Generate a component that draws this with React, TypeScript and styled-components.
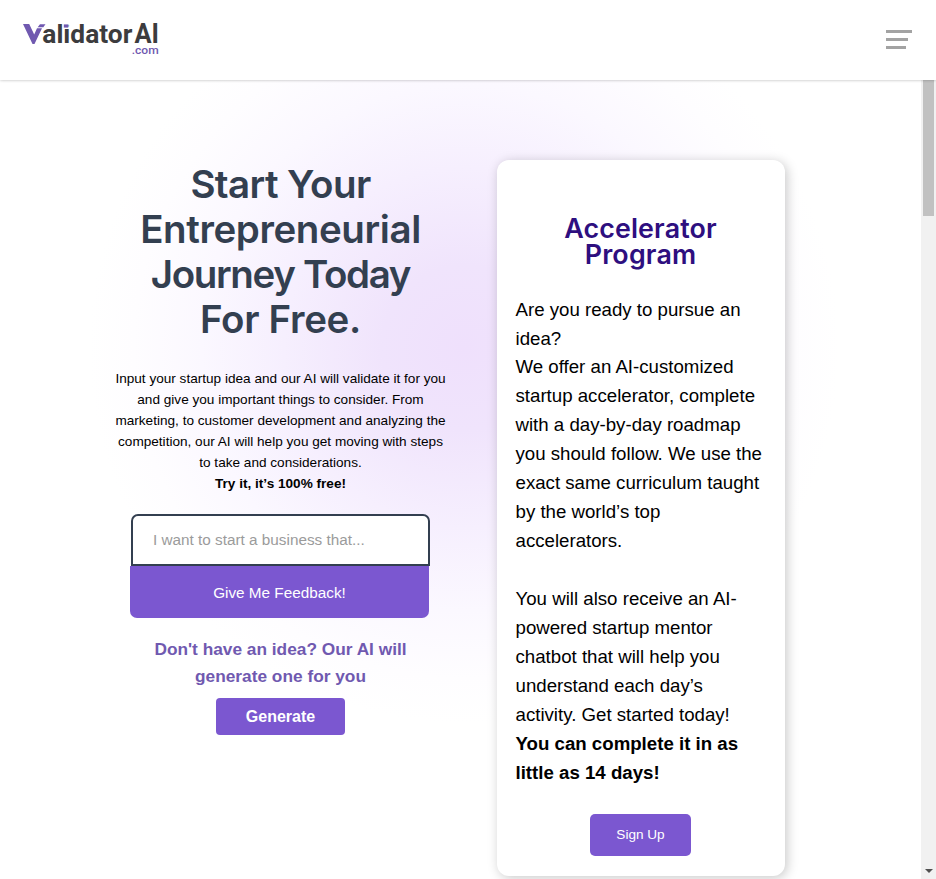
import React from "react";
import styled, { createGlobalStyle } from "styled-components";

const GlobalStyle = createGlobalStyle`
  * { box-sizing: border-box; }
  html, body { margin: 0; padding: 0; background: #fff; overflow: hidden; }
  body { font-family: "Liberation Sans", Arial, sans-serif; color: #000; }
`;

const Page = styled.div`
  width: 936px;
  height: 879px;
  display: flex;
  flex-direction: column;
  overflow: hidden;
`;

const Header = styled.header`
  flex: none;
  height: 80px;
  display: flex;
  justify-content: space-between;
  align-items: flex-start;
  padding: 20px 24px 0 20px;
  background: #fff;
  box-shadow: 0 0 3px rgba(0, 0, 0, 0.3);
  z-index: 1;
`;

const Logo = styled.svg`
  display: block;
  width: 142px;
  height: 38px;
  overflow: visible;
  font-family: Roboto, "Liberation Sans", sans-serif;
`;

const MenuButton = styled.button`
  display: flex;
  flex-direction: column;
  gap: 5px;
  width: 26px;
  margin-top: 10px;
  padding: 0;
  border: 0;
  background: none;
`;

const MenuBar = styled.span<{ $width: number }>`
  width: ${(p) => p.$width}px;
  height: 3px;
  background: #a3a3a3;
`;

const Body = styled.div`
  flex: 1;
  min-height: 0;
  display: flex;
`;

const Hero = styled.main`
  flex: 1;
  display: flex;
  align-items: flex-start;
  padding: 80px 0 0 110px;
  background: radial-gradient(
    ellipse 375px 375px at 464px 268px,
    #efe0fc 0%,
    #f0e4fc 22%,
    #f6effe 48%,
    #fbf8ff 70%,
    #fefdff 88%,
    #ffffff 100%
  );
`;

const Pitch = styled.section`
  width: 341px;
  margin-right: 46px;
  display: flex;
  flex-direction: column;
  align-items: center;
  text-align: center;
`;

const Title = styled.h1`
  margin: 2px 0 0;
  font: 600 38.5px/45px Inter, sans-serif;
  color: #333f50;
`;

const TitleLine = styled.span<{ $spacing: number }>`
  display: block;
  white-space: nowrap;
  letter-spacing: ${(p) => p.$spacing}px;
`;

const Intro = styled.p`
  margin: 26px 0 0;
  font-size: 13.6px;
  line-height: 21px;
  white-space: nowrap;
`;

const IdeaForm = styled.form`
  width: 301px;
  margin-top: 20px;
  display: flex;
  flex-direction: column;
  align-items: flex-start;
`;

const IdeaInput = styled.input`
  width: 299px;
  height: 52px;
  margin-left: 1px;
  padding: 0 20px;
  border: 2px solid #333f50;
  border-radius: 7px 7px 0 0;
  background: #fff;
  font: 15.3px "Liberation Sans", sans-serif;
  &::placeholder { color: #9b9b9b; opacity: 1; }
`;

const Button = styled.button<{ $w: number; $h: number; $size: number; $radius: string; $bold?: boolean; $top?: number }>`
  width: ${(p) => p.$w}px;
  height: ${(p) => p.$h}px;
  padding: ${(p) => p.$top ?? 0}px 0 0;
  border: 0;
  border-radius: ${(p) => p.$radius};
  background: #7b57d0;
  color: #fff;
  font: ${(p) => (p.$bold ? 700 : 400)} ${(p) => p.$size}px "Liberation Sans", sans-serif;
`;

const Prompt = styled.p`
  margin: 18px 0 8px;
  font-size: 17.3px;
  font-weight: 700;
  line-height: 27px;
  color: #7059b0;
  white-space: nowrap;
`;

const Card = styled.aside`
  width: 288px;
  height: 716px;
  padding: 55px 19.5px 0 18.5px;
  border-radius: 12px;
  background: #fff;
  box-shadow: 2px 2px 12px rgba(0, 0, 0, 0.22);
  display: flex;
  flex-direction: column;
  align-items: center;
`;

const CardTitle = styled.h2`
  margin: 0 0 28.6px;
  font: 600 26.8px/26px Inter, sans-serif;
  color: #2e0f7f;
  text-align: center;
`;

const CardText = styled.p`
  align-self: stretch;
  margin: 0 0 26.4px;
  font-size: 18.67px;
  line-height: 28.94px;
  white-space: nowrap;
`;

const Scrollbar = styled.div`
  flex: none;
  width: 15px;
  display: flex;
  flex-direction: column;
  align-items: center;
  justify-content: space-between;
  background: #f1f1f1;
`;

const Thumb = styled.div`
  width: 11px;
  height: 136px;
  background: #c1c1c1;
`;

const Arrow = styled.div`
  border: 4px solid transparent;
  border-top-color: #505050;
  border-bottom: 0;
  margin-bottom: 6px;
`;

const cardLines = [
  "Are you ready to pursue an",
  "idea?",
  "We offer an AI-customized",
  "startup accelerator, complete",
  "with a day-by-day roadmap",
  "you should follow. We use the",
  "exact same curriculum taught",
  "by the world’s top",
  "accelerators.",
  "",
  "You will also receive an AI-",
  "powered startup mentor",
  "chatbot that will help you",
  "understand each day’s",
  "activity. Get started today!",
];

export default function App() {
  return (
    <Page>
      <GlobalStyle />
      <Header>
        <Logo viewBox="0 0 142 38" aria-label="ValidatorAI.com">
          <path d="M3 4h6.2l5 10.5L17 8.3h5L14.5 24h-2z" fill="#7059b0" />
          <path d="M17.6 7.2 20 4.2h5.5l-2.2 3z" fill="#7059b0" />
          <text x="22.3" y="23.4" fontSize="25.5" fontWeight="700" fill="#3c3c3e" textLength="90" lengthAdjust="spacingAndGlyphs">alidator</text>
          <text x="114.5" y="23.4" fontSize="27" fontWeight="700" fill="#3c3c3e" textLength="24.5" lengthAdjust="spacingAndGlyphs">AI</text>
          <path d="M43.4 3.2h5v5.6h-5z" fill="#fff" />
          <path d="M43.8 4.4h4.2v3.2h-4.2z" fill="#7059b0" />
          <text x="111.7" y="34" fontSize="11.5" fontWeight="500" fill="#7059b0" textLength="27" lengthAdjust="spacingAndGlyphs">.com</text>
        </Logo>
        <MenuButton aria-label="Menu">
          <MenuBar $width={26} />
          <MenuBar $width={22} />
          <MenuBar $width={20} />
        </MenuButton>
      </Header>
      <Body>
        <Hero>
          <Pitch>
            <Title>
              <TitleLine $spacing={-0.6}>Start Your</TitleLine>
              <TitleLine $spacing={-0.4}>Entrepreneurial</TitleLine>
              <TitleLine $spacing={-1.35}>Journey Today</TitleLine>
              <TitleLine $spacing={-0.3}>For Free.</TitleLine>
            </Title>
            <Intro>
              Input your startup idea and our AI will validate it for you<br />
              and give you important things to consider. From<br />
              marketing, to customer development and analyzing the<br />
              competition, our AI will help you get moving with steps<br />
              to take and considerations.<br />
              <b>Try it, it’s 100% free!</b>
            </Intro>
            <IdeaForm>
              <IdeaInput placeholder="I want to start a business that..." />
              <Button type="button" $w={299} $h={52} $size={15.3} $radius="0 0 7px 7px" $top={2}>Give Me Feedback!</Button>
            </IdeaForm>
            <Prompt>
              Don't have an idea? Our AI will<br />
              generate one for you
            </Prompt>
            <Button $w={129} $h={37} $size={16} $radius="4px" $bold>Generate</Button>
          </Pitch>
          <Card>
            <CardTitle>
              <TitleLine $spacing={0.15}>Accelerator</TitleLine>
              <TitleLine $spacing={0.2}>Program</TitleLine>
            </CardTitle>
            <CardText>
              {cardLines.map((line, i) => (
                <React.Fragment key={i}>{line}<br /></React.Fragment>
              ))}
              <b>You can complete it in as<br />little as 14 days!</b>
            </CardText>
            <Button $w={101} $h={42} $size={13.6} $radius="5px">Sign Up</Button>
          </Card>
        </Hero>
        <Scrollbar>
          <Thumb />
          <Arrow />
        </Scrollbar>
      </Body>
    </Page>
  );
}
